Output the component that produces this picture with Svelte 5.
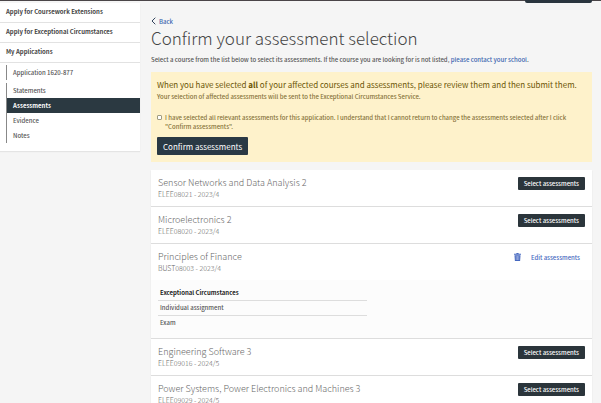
<script>
  const nav = ['Apply for Coursework Extensions', 'Apply for Exceptional Circumstances', 'My Applications'];
  const steps = ['Statements', 'Assessments', 'Evidence', 'Notes'];
  const courses = [
    { name: 'Sensor Networks and Data Analysis 2', code: 'ELEE08021 - 2023/4' },
    { name: 'Microelectronics 2', code: 'ELEE08020 - 2023/4' },
    { name: 'Principles of Finance', code: 'BUST08003 - 2023/4', assessments: ['Individual assignment', 'Exam'] },
    { name: 'Engineering Software 3', code: 'ELEE09016 - 2024/5' },
    { name: 'Power Systems, Power Electronics and Machines 3', code: 'ELEE09029 - 2024/5' }
  ];
  let confirmed = $state(false);
</script>

<div class="page">
  <div class="topbar"><span class="tab"></span></div>
  <div class="layout">
    <nav class="sidebar" aria-label="Applications">
      {#each nav as item}
        <a class="section" href="#top">{item}</a>
      {/each}
      <div class="sub">
        <a class="application" href="#application">Application 1620-877</a>
        <div class="steps">
          {#each steps as step}
            <a href="#{step}" class:active={step === 'Assessments'}>{step}</a>
          {/each}
        </div>
      </div>
    </nav>

    <main>
      <a class="back" href="#back">
        <svg viewBox="0 0 5 8" width="5" height="8" aria-hidden="true"><path d="M4.3 .7 1 4l3.3 3.3" fill="none" stroke="currentColor" /></svg>
        Back
      </a>
      <h1>Confirm your assessment selection</h1>
      <p class="intro">Select a course from the list below to select its assessments. If the course you are looking for is not listed, <a href="#school">please contact your school</a>.</p>

      <section class="notice">
        <h2>When you have selected <b>all</b> of your affected courses and assessments, please review them and then submit them.</h2>
        <p>Your selection of affected assessments will be sent to the Exceptional Circumstances Service.</p>
        <label>
          <input type="checkbox" bind:checked={confirmed} />
          <span>I have selected all relevant assessments for this application. I understand that I cannot return to change the assessments selected after I click "Confirm assessments".</span>
        </label>
        <button class="confirm" type="button">Confirm assessments</button>
      </section>

      <div class="courses">
        {#each courses as course}
          <article>
            <header>
              <div>
                <h3>{course.name}</h3>
                <p>{course.code}</p>
              </div>
              {#if course.assessments}
                <div class="actions">
                  <button class="trash" type="button" aria-label="Remove assessments">
                    <svg viewBox="0 0 7 8" width="7" height="8" aria-hidden="true">
                      <path d="M0 .8h2.2L2.6 0h1.8l.4.8H7v1H0zM.5 2.2h6L6.1 8H.9z" fill="currentColor" />
                      <path d="M2.2 3v4M3.5 3v4M4.8 3v4" stroke="#fff" stroke-width=".4" />
                    </svg>
                  </button>
                  <button class="edit" type="button">Edit assessments</button>
                </div>
              {:else}
                <button class="select" type="button">Select assessments</button>
              {/if}
            </header>
            {#if course.assessments}
              <div class="details">
                <table>
                  <thead><tr><th>Exceptional Circumstances</th></tr></thead>
                  <tbody>
                    {#each course.assessments as item}
                      <tr><td>{item}</td></tr>
                    {/each}
                  </tbody>
                </table>
              </div>
            {/if}
          </article>
        {/each}
      </div>
    </main>
  </div>
</div>

<style>
  :global(body) { background: #f5f5f5; }
  .page {
    color: #555;
    font-family: "Noto Sans CJK SC", "Open Sans", sans-serif;
    font-size: 6px;
    font-weight: 500;
    line-height: 9px;
  }
  * { box-sizing: border-box; }
  h1, h2, h3, p { margin: 0; }
  a { color: #3c66b0; text-decoration: none; }
  button { border: 0; padding: 0; font: inherit; cursor: pointer; }
  svg { display: block; }
  .topbar { height: 3px; border-top: 1px solid #4a4548; display: flex; justify-content: flex-end; padding-right: 9px; }
  .tab { width: 67px; height: 3px; margin-top: -1px; background: #2a353e; border-radius: 0 0 2px 2px; }
  .layout { display: grid; grid-template-columns: 140px minmax(0, 1fr); gap: 11px; padding-right: 9px; align-items: start; }

  .sidebar { background: #fff; box-shadow: 0 1px 1px #e4e4e4; }
  .section { display: block; height: 20px; padding-left: 6px; line-height: 17px; color: #444; font-weight: 700; border-bottom: 1px solid #e2e2e2; }
  .sub { display: flex; flex-direction: column; gap: 3px; padding: 2px 0 8px 6px; }
  .application, .steps { border-left: 1px solid #888; }
  .sub a { display: block; height: 15px; padding-left: 6px; line-height: 15px; color: #555; }
  .sub .active { background: #2b3941; color: #fff; font-weight: 700; }

  main { padding-top: 13px; }
  .back { display: flex; align-items: center; gap: 3px; height: 10px; width: max-content; }
  .back svg { color: #33445c; }
  h1 { font-size: 17px; line-height: 24px; font-weight: 300; color: #444; }
  .intro { margin-top: 5px; }
  .notice { margin-top: 8px; padding: 8px 6px 7px; background: #fef2cb; color: #86733a; }
  h2 { font-size: 8px; line-height: 10px; font-weight: 400; color: #6b5505; }
  .notice p { margin-top: 2px; }
  label { display: flex; gap: 3px; margin-top: 12px; padding-right: 12px; }
  input { appearance: none; flex: none; width: 5px; height: 5px; margin: 2px 0 0; border: 1px solid #a09c80; border-radius: 1px; background: #fff; }
  input:checked { background: #2b3941; }
  .confirm { display: block; margin-top: 6px; height: 18px; padding: 0 6px; border-radius: 1px; background: #2a3944; color: #fff; font-size: 8px; font-weight: 400; }

  .courses { display: flex; flex-direction: column; gap: 1px; margin-top: 8px; }
  article { background: #fff; box-shadow: 0 1px 1px #ddd; }
  header { display: flex; justify-content: space-between; align-items: flex-start; height: 36px; padding: 7px 7px 0; }
  h3 { font-size: 9px; line-height: 12px; font-weight: 300; color: #666; }
  header p { font-size: 7px; line-height: 11px; font-weight: 300; color: #666; }
  .select { height: 13px; padding: 0 6px; border-radius: 1px; background: #2b353b; color: #fff; }
  .actions { display: flex; align-items: center; gap: 10px; height: 12px; padding-right: 5px; }
  .trash, .edit { background: none; color: #4668c0; }
  .details { padding: 5px 7px 8px; background: #fcfcfc; }
  table { width: 49%; border-collapse: collapse; }
  th, td { height: 15px; padding: 0 2px; text-align: left; }
  th { color: #222; font-weight: 700; }
  td { border-top: 1px solid #ddd; }
</style>
